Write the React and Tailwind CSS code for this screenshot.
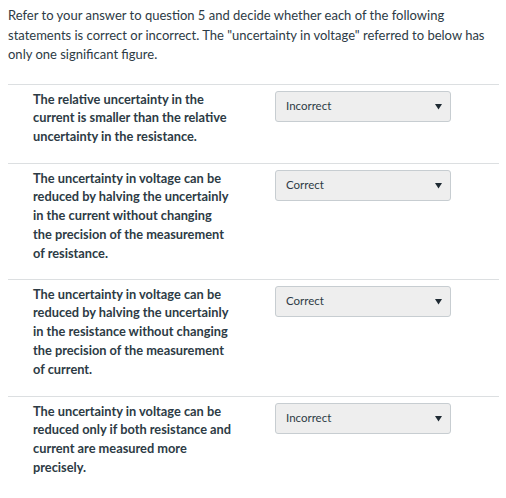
import React from "react";

const rows = [
  {
    text: "The relative uncertainty in the current is smaller than the relative uncertainty in the resistance.",
    value: "Incorrect",
    h: "h-[79px]",
  },
  {
    text: "The uncertainty in voltage can be reduced by halving the uncertainly in the current without changing the precision of the measurement of resistance.",
    value: "Correct",
    h: "h-[116px]",
  },
  {
    text: "The uncertainty in voltage can be reduced by halving the uncertainly in the resistance without changing the precision of the measurement of current.",
    value: "Correct",
    h: "h-[117px]",
  },
  {
    text: "The uncertainty in voltage can be reduced only if both resistance and current are measured more precisely.",
    value: "Incorrect",
    h: "h-[102px]",
  },
];

function Select({ value }) {
  return (
    <div className="flex h-[31px] w-[176px] items-center justify-between rounded-[3px] border border-[#c7cdd1] bg-[#eeeeee] pl-[10px] pr-[8px]">
      <span className="text-[11.5px] text-[#2d3b45]">{value}</span>
      <svg width="7" height="7" viewBox="0 0 7 7">
        <path d="M0 1 L7 1 L3.5 6.5 Z" fill="#1f2a33" />
      </svg>
    </div>
  );
}

export default function App() {
  return (
    <div className="min-h-[498px] w-[506px] bg-white px-2 text-[#2d3b45]" style={{ fontFamily: "Lato, 'Open Sans', sans-serif" }}>
      <p className="pt-[6px] pb-[19px] text-[13px] leading-[19.5px]">
        Refer to your answer to question 5 and decide whether each of the following statements is correct or incorrect. The "uncertainty in voltage" referred to below has only one significant figure.
      </p>
      <div className="mr-[-1px]">
        {rows.map((r, i) => (
          <div key={i} className={`flex border-t border-[#dcdfe1] ${r.h}`}>
            <div className="ml-[25px] w-[200px] pt-[5px] text-[12.8px] font-bold leading-[18.8px]">
              {r.text}
            </div>
            <div className="ml-[42px] pt-[6px]">
              <Select value={r.value} />
            </div>
          </div>
        ))}
      </div>
    </div>
  );
}
